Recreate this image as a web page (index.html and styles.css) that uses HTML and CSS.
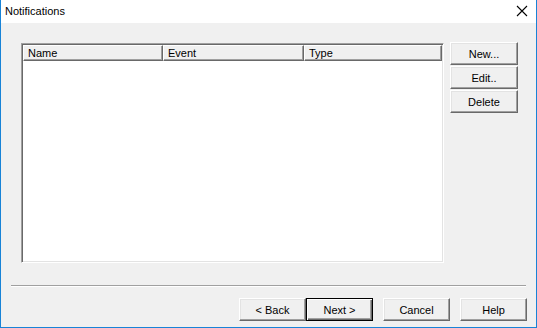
FILE: index.html
```html
<!DOCTYPE html>
<html lang="en">
<head>
    <meta charset="UTF-8">
    <title>Notifications</title>
    <link rel="stylesheet" href="styles.css">
</head>
<body>
    <div class="window">
        <div class="titlebar">
            <span class="title">Notifications</span>
            <svg class="close" width="12" height="12" viewBox="0 0 12 12">
                <path d="M1 1 L11 11 M11 1 L1 11" stroke="#000" stroke-width="1.1" fill="none"/>
            </svg>
        </div>
        <div class="client">
            <div class="main">
                <div class="listview">
                    <div class="header">
                        <div class="col col-name">Name</div>
                        <div class="col col-event">Event</div>
                        <div class="col col-type">Type</div>
                    </div>
                    <div class="rows"></div>
                </div>
                <div class="side-buttons">
                    <button class="btn">New...</button>
                    <button class="btn">Edit..</button>
                    <button class="btn">Delete</button>
                </div>
            </div>
            <div class="separator"></div>
            <div class="wizard-buttons">
                <div class="pair">
                    <button class="btn">&lt; Back</button>
                    <button class="btn default">Next &gt;</button>
                </div>
                <button class="btn">Cancel</button>
                <button class="btn">Help</button>
            </div>
        </div>
    </div>
</body>
</html>
```

FILE: styles.css
```css
html, body {
    margin: 0;
    padding: 0;
}
body {
    font-family: "Liberation Sans", Arial, sans-serif;
    font-size: 11px;
    color: #000;
    background: #fff;
}
.window {
    width: 537px;
    height: 328px;
    box-sizing: border-box;
    border: 1px solid #1883d7;
    border-top: none;
    display: flex;
    flex-direction: column;
    background: #f0f0f0;
}
.titlebar {
    height: 23px;
    background: #fff;
    display: flex;
    align-items: center;
    justify-content: space-between;
    padding: 0 8px 0 4px;
}
.title {
    font-size: 11px;
    font-family: "Liberation Sans", Arial, sans-serif;
    margin-top: -2px;
}
.close {
    margin-top: -1px;
}
.client {
    flex: 1;
    display: flex;
    flex-direction: column;
}
.main {
    display: flex;
    padding: 19px 0 0 20px;
    gap: 6px;
}
.listview {
    width: 423px;
    height: 220px;
    margin-top: 1px;
    box-sizing: border-box;
    border: 1px solid;
    border-color: #a0a0a0 #fff #fff #a0a0a0;
    box-shadow: inset 1px 1px #696969, inset -1px -1px #e3e3e3;
    padding: 1px;
    display: flex;
    flex-direction: column;
    background: #fff;
}
.header {
    display: flex;
    height: 16px;
    background: #f0f0f0;
}
.col {
    box-sizing: border-box;
    height: 16px;
    line-height: 14px;
    padding-left: 4px;
    border: 1px solid;
    border-color: #fff #696969 #696969 #fff;
    box-shadow: inset -1px -1px #a0a0a0;
}
.col-name {
    width: 140px;
}
.col-event {
    width: 141px;
}
.col-type {
    flex: 1;
}
.rows {
    flex: 1;
    background: #fff;
}
.side-buttons {
    display: flex;
    flex-direction: column;
    gap: 1px;
}
.side-buttons .btn {
    width: 68px;
}
.btn {
    box-sizing: border-box;
    width: 67px;
    height: 23px;
    padding: 0;
    margin: 0;
    background: #f0f0f0;
    border: 1px solid;
    border-color: #fff #696969 #696969 #fff;
    box-shadow: inset -1px -1px #a0a0a0, inset 1px 1px #e3e3e3;
    font-family: "Liberation Sans", Arial, sans-serif;
    font-size: 11px;
    color: #000;
}
.btn.default {
    border-color: #000;
    box-shadow: inset 1px 1px #fff, inset -1px -1px #696969, inset -2px -2px #a0a0a0;
}
.separator {
    margin: 22px 10px 0 10px;
    border-top: 1px solid #a0a0a0;
    border-bottom: 1px solid #fff;
    height: 0;
}
.wizard-buttons {
    display: flex;
    justify-content: flex-end;
    gap: 10px;
    padding: 11px 9px 0 0;
}
.pair {
    display: flex;
}
```
